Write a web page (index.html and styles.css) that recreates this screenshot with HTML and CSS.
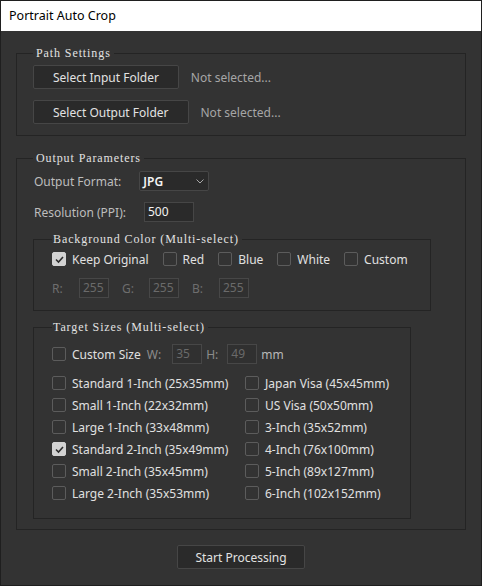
FILE: index.html
```html
<!DOCTYPE html>
<html lang="en">
  <head>
    <meta charset="UTF-8">
    <meta name="viewport" content="width=device-width, initial-scale=1.0">
    <title>Portrait Auto Crop</title>
    <link rel="stylesheet" href="styles.css">
  </head>
  <body>
    <div class="window">
      <div class="titlebar">Portrait Auto Crop</div>
      <div class="content">

        <fieldset class="group path-group">
          <legend>Path Settings</legend>
          <div class="path-list">
            <div class="path-row">
              <button class="btn">Select Input Folder</button>
              <span class="path-value">Not selected...</span>
            </div>
            <div class="path-row">
              <button class="btn">Select Output Folder</button>
              <span class="path-value">Not selected...</span>
            </div>
          </div>
        </fieldset>

        <fieldset class="group params-group">
          <legend>Output Parameters</legend>
          <div class="field-row">
            <span class="field-label">Output Format:</span>
            <div class="combo">
              <span>JPG</span>
              <svg width="8" height="5" viewBox="0 0 8 5"><path d="M0.5 0.5 L4 4 L7.5 0.5" fill="none" stroke="#a8a8a8" stroke-width="1"/></svg>
            </div>
          </div>
          <div class="field-row res-row">
            <span class="field-label">Resolution (PPI):</span>
            <div class="text-input res-input">500</div>
          </div>

          <fieldset class="group sub-group bg-group">
            <legend>Background Color (Multi-select)</legend>
            <div class="check-row">
              <div class="check-item"><span class="check on"><svg width="11" height="11" viewBox="0 0 11 11"><path d="M2 5.5 L4.5 8 L9 3" fill="none" stroke="#2c2c2c" stroke-width="1.6"/></svg></span>Keep Original</div>
              <div class="check-item"><span class="check"></span>Red</div>
              <div class="check-item"><span class="check"></span>Blue</div>
              <div class="check-item"><span class="check"></span>White</div>
              <div class="check-item"><span class="check"></span>Custom</div>
            </div>
            <div class="rgb-row">
              <span class="rgb-label">R:</span><div class="text-input small-input off">255</div>
              <span class="rgb-label">G:</span><div class="text-input small-input off">255</div>
              <span class="rgb-label">B:</span><div class="text-input small-input off">255</div>
            </div>
          </fieldset>

          <fieldset class="group sub-group size-group">
            <legend>Target Sizes (Multi-select)</legend>
            <div class="custom-row">
              <div class="check-item"><span class="check"></span>Custom Size</div>
              <span class="dim-label w-label">W:</span>
              <div class="text-input small-input off w-input">35</div>
              <span class="dim-label h-label">H:</span>
              <div class="text-input small-input off h-input">49</div>
              <span class="unit">mm</span>
            </div>
            <div class="size-grid">
              <div class="check-item"><span class="check"></span>Standard 1-Inch (25x35mm)</div>
              <div class="check-item"><span class="check"></span>Japan Visa (45x45mm)</div>
              <div class="check-item"><span class="check"></span>Small 1-Inch (22x32mm)</div>
              <div class="check-item"><span class="check"></span>US Visa (50x50mm)</div>
              <div class="check-item"><span class="check"></span>Large 1-Inch (33x48mm)</div>
              <div class="check-item"><span class="check"></span>3-Inch (35x52mm)</div>
              <div class="check-item"><span class="check on"><svg width="11" height="11" viewBox="0 0 11 11"><path d="M2 5.5 L4.5 8 L9 3" fill="none" stroke="#2c2c2c" stroke-width="1.6"/></svg></span>Standard 2-Inch (35x49mm)</div>
              <div class="check-item"><span class="check"></span>4-Inch (76x100mm)</div>
              <div class="check-item"><span class="check"></span>Small 2-Inch (35x45mm)</div>
              <div class="check-item"><span class="check"></span>5-Inch (89x127mm)</div>
              <div class="check-item"><span class="check"></span>Large 2-Inch (35x53mm)</div>
              <div class="check-item"><span class="check"></span>6-Inch (102x152mm)</div>
            </div>
          </fieldset>
        </fieldset>

        <div class="actions">
          <button class="btn start-btn">Start Processing</button>
        </div>
      </div>
    </div>
  </body>
</html>
```

FILE: styles.css
```css
body {
    margin: 0;
    background-color: #333333;
  }

  .window {
    width: 482px;
    height: 586px;
    box-sizing: border-box;
    border: 1px solid #1f1f1f;
    background-color: #333333;
    font-family: "Noto Sans", sans-serif;
    font-size: 12px;
    color: #dcdcdc;
  }

  .titlebar {
    height: 30px;
    line-height: 30px;
    padding-left: 8px;
    background-color: #fff;
    color: #000;
    font-size: 12.5px;
  }

  .content {
    display: flex;
    flex-direction: column;
    padding: 16px 15px 0;
  }

  /* group boxes */
  .group {
    margin: 0;
    min-width: 0;
    border: 1px solid #242424;
    padding: 6px 15px 11px 16px;
  }

  .group legend {
    padding: 0 3px;
    font-family: "Liberation Serif", serif;
    font-size: 12px;
    line-height: 12px;
    letter-spacing: 0.9px;
    color: #e2e2e2;
  }

  .params-group {
    margin-top: 16px;
    padding: 7px 15px 10px 16px;
  }

  .sub-group {
    box-sizing: border-box;
    padding: 4px 10px 12px 18px;
  }

  .sub-group legend {
    padding: 0 3px 0 1px;
  }

  .bg-group {
    width: 398px;
    margin-top: 11px;
  }

  .size-group {
    width: 378px;
    margin-top: 10px;
    padding-top: 11px;
    padding-bottom: 14px;
  }

  /* buttons */
  .btn {
    height: 24px;
    padding: 0 19px;
    background-color: #2a2a2a;
    border: 1px solid #464646;
    border-radius: 2px;
    font-family: inherit;
    font-size: 12px;
    color: #e2e2e2;
  }

  .path-list {
    display: flex;
    flex-direction: column;
    gap: 11px;
  }

  .path-row {
    display: flex;
    align-items: center;
    gap: 12px;
  }

  .path-value {
    color: #a6a6a6;
  }

  /* output parameters */
  .field-row {
    display: flex;
    align-items: center;
    gap: 18px;
  }

  .res-row {
    margin-top: 11px;
  }

  .field-label {
    padding-left: 1px;
    color: #bdbdbd;
  }

  .combo {
    box-sizing: border-box;
    width: 70px;
    height: 20px;
    display: flex;
    align-items: center;
    justify-content: space-between;
    padding: 0 4px 0 3px;
    background-color: #2a2a2a;
    border: 1px solid #464646;
    border-radius: 2px;
    color: #f4f4f4;
    font-weight: 600;
  }

  .text-input {
    box-sizing: border-box;
    height: 20px;
    line-height: 18px;
    padding-left: 3px;
    background-color: #2a2a2a;
    border: 1px solid #464646;
    color: #f2f2f2;
  }

  .res-input {
    width: 50px;
  }

  .small-input {
    width: 30px;
  }

  .text-input.off {
    background-color: #303030;
    border-color: #474747;
    color: #6a6a6a;
  }

  /* checkboxes */
  .check-row {
    display: flex;
    align-items: center;
    gap: 14px;
    height: 20px;
  }

  .check-item {
    display: flex;
    align-items: center;
    gap: 6px;
    color: #e0e0e0;
  }

  .check {
    box-sizing: border-box;
    width: 14px;
    height: 14px;
    display: flex;
    align-items: center;
    justify-content: center;
    border: 1px solid #5c5c5c;
    border-radius: 2px;
  }

  .check.on {
    background-color: #d2d2d2;
    border-color: #d2d2d2;
  }

  .rgb-row {
    display: flex;
    align-items: center;
    margin-top: 9px;
  }

  .rgb-label {
    width: 27px;
    color: #6e6e6e;
  }

  .rgb-row .small-input {
    margin-right: 13px;
  }

  /* target sizes */
  .custom-row {
    display: flex;
    align-items: center;
    height: 20px;
  }

  .dim-label {
    color: #8c8c8c;
  }

  .w-label {
    margin-left: 6px;
  }

  .w-input {
    margin-left: 11px;
  }

  .h-label {
    margin-left: 4px;
  }

  .h-input {
    margin-left: 9px;
  }

  .unit {
    margin-left: 4px;
    color: #b8b8b8;
  }

  .size-grid {
    display: grid;
    grid-template-columns: 193px 1fr;
    grid-auto-rows: 22px;
    align-items: center;
    margin-top: 8px;
  }

  .actions {
    display: flex;
    justify-content: center;
    margin-top: 15px;
  }

  .start-btn {
    width: 128px;
    padding: 0;
  }
```
